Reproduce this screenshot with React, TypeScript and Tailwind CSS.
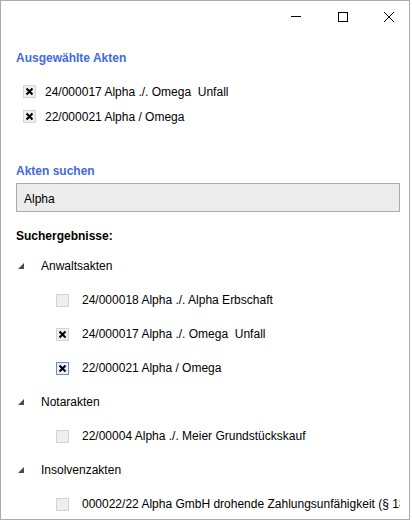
import React from "react";

type Item = { label: string; checked: boolean; focused?: boolean };
type Group = { name: string; items: Item[] };

const selected: string[] = [
  "24/000017 Alpha ./. Omega  Unfall",
  "22/000021 Alpha / Omega",
];

const groups: Group[] = [
  {
    name: "Anwaltsakten",
    items: [
      { label: "24/000018 Alpha ./. Alpha Erbschaft", checked: false },
      { label: "24/000017 Alpha ./. Omega  Unfall", checked: true },
      { label: "22/000021 Alpha / Omega", checked: true, focused: true },
    ],
  },
  {
    name: "Notarakten",
    items: [{ label: "22/00004 Alpha ./. Meier Grundstückskauf", checked: false }],
  },
  {
    name: "Insolvenzakten",
    items: [
      {
        label: "000022/22 Alpha GmbH drohende Zahlungsunfähigkeit (§ 18 InsO)",
        checked: false,
      },
    ],
  },
];

function CheckBox({ checked, focused }: { checked: boolean; focused?: boolean }) {
  return (
    <span
      className={
        focused
          ? "w-[13px] h-[13px] shrink-0 border border-[#5f8fd8] bg-[#f0f0f0] flex items-center justify-center"
          : "w-[13px] h-[13px] shrink-0 border border-[#d4d4d4] bg-[#efefef] flex items-center justify-center"
      }
    >
      {checked && (
        <svg width="11" height="11" viewBox="0 0 11 11">
          <path d="M2.5 2.5 L8.5 8.5 M8.5 2.5 L2.5 8.5" stroke="#000" strokeWidth="2" fill="none" />
        </svg>
      )}
    </span>
  );
}

function Expander() {
  return (
    <svg width="6" height="6" viewBox="0 0 6 6" className="shrink-0">
      <path d="M6 0 L6 6 L0 6 Z" fill="#4a4a4a" />
    </svg>
  );
}

export default function App() {
  return (
    <div className="w-[410px] h-[520px] border border-[#ababab] bg-white overflow-hidden font-['Liberation_Sans',Arial,sans-serif] text-[12px] leading-[16px] text-black">
      {/* caption buttons */}
      <div className="h-[32px] flex items-center justify-end pr-[15px]">
        <svg width="10" height="10" viewBox="0 0 10 10">
          <path d="M0 4.5 H10" stroke="#000" strokeWidth="1" />
        </svg>
        <svg width="10" height="10" viewBox="0 0 10 10" className="ml-[37px]">
          <rect x="0.5" y="0.5" width="9" height="9" stroke="#000" strokeWidth="1" fill="none" />
        </svg>
        <svg width="10" height="10" viewBox="0 0 10 10" className="ml-[36px]">
          <path d="M0 0 L10 10 M10 0 L0 10" stroke="#000" strokeWidth="1" fill="none" />
        </svg>
      </div>

      <div className="pl-[15px]">
        <div className="mt-[17px] font-bold text-[#4169e1]">Ausgewählte Akten</div>
        <div className="mt-[13px] pl-[7px]">
          {selected.map((s) => (
            <div key={s} className="h-[25px] flex items-center">
              <CheckBox checked />
              <span className="ml-[9px] whitespace-pre">{s}</span>
            </div>
          ))}
        </div>

        <div className="mt-[34px] font-bold text-[#4169e1]">Akten suchen</div>
        <div className="mt-[4px] w-[384px] h-[29px] border border-[#ababab] bg-[#ececec] pl-[7px] pt-[7px]">
          Alpha
        </div>

        <div className="mt-[16px] font-bold">Suchergebnisse:</div>

        <div className="mt-[5px] w-[384px] overflow-hidden">
          {groups.map((g) => (
            <div key={g.name}>
              <div className="h-[34px] flex items-center pl-[2px]">
                <Expander />
                <span className="ml-[17px] whitespace-nowrap">{g.name}</span>
              </div>
              {g.items.map((it) => (
                <div key={it.label} className="h-[34px] flex items-center pl-[40px]">
                  <CheckBox checked={it.checked} focused={it.focused} />
                  <span className="ml-[13px] whitespace-pre">{it.label}</span>
                </div>
              ))}
            </div>
          ))}
        </div>
      </div>
    </div>
  );
}
